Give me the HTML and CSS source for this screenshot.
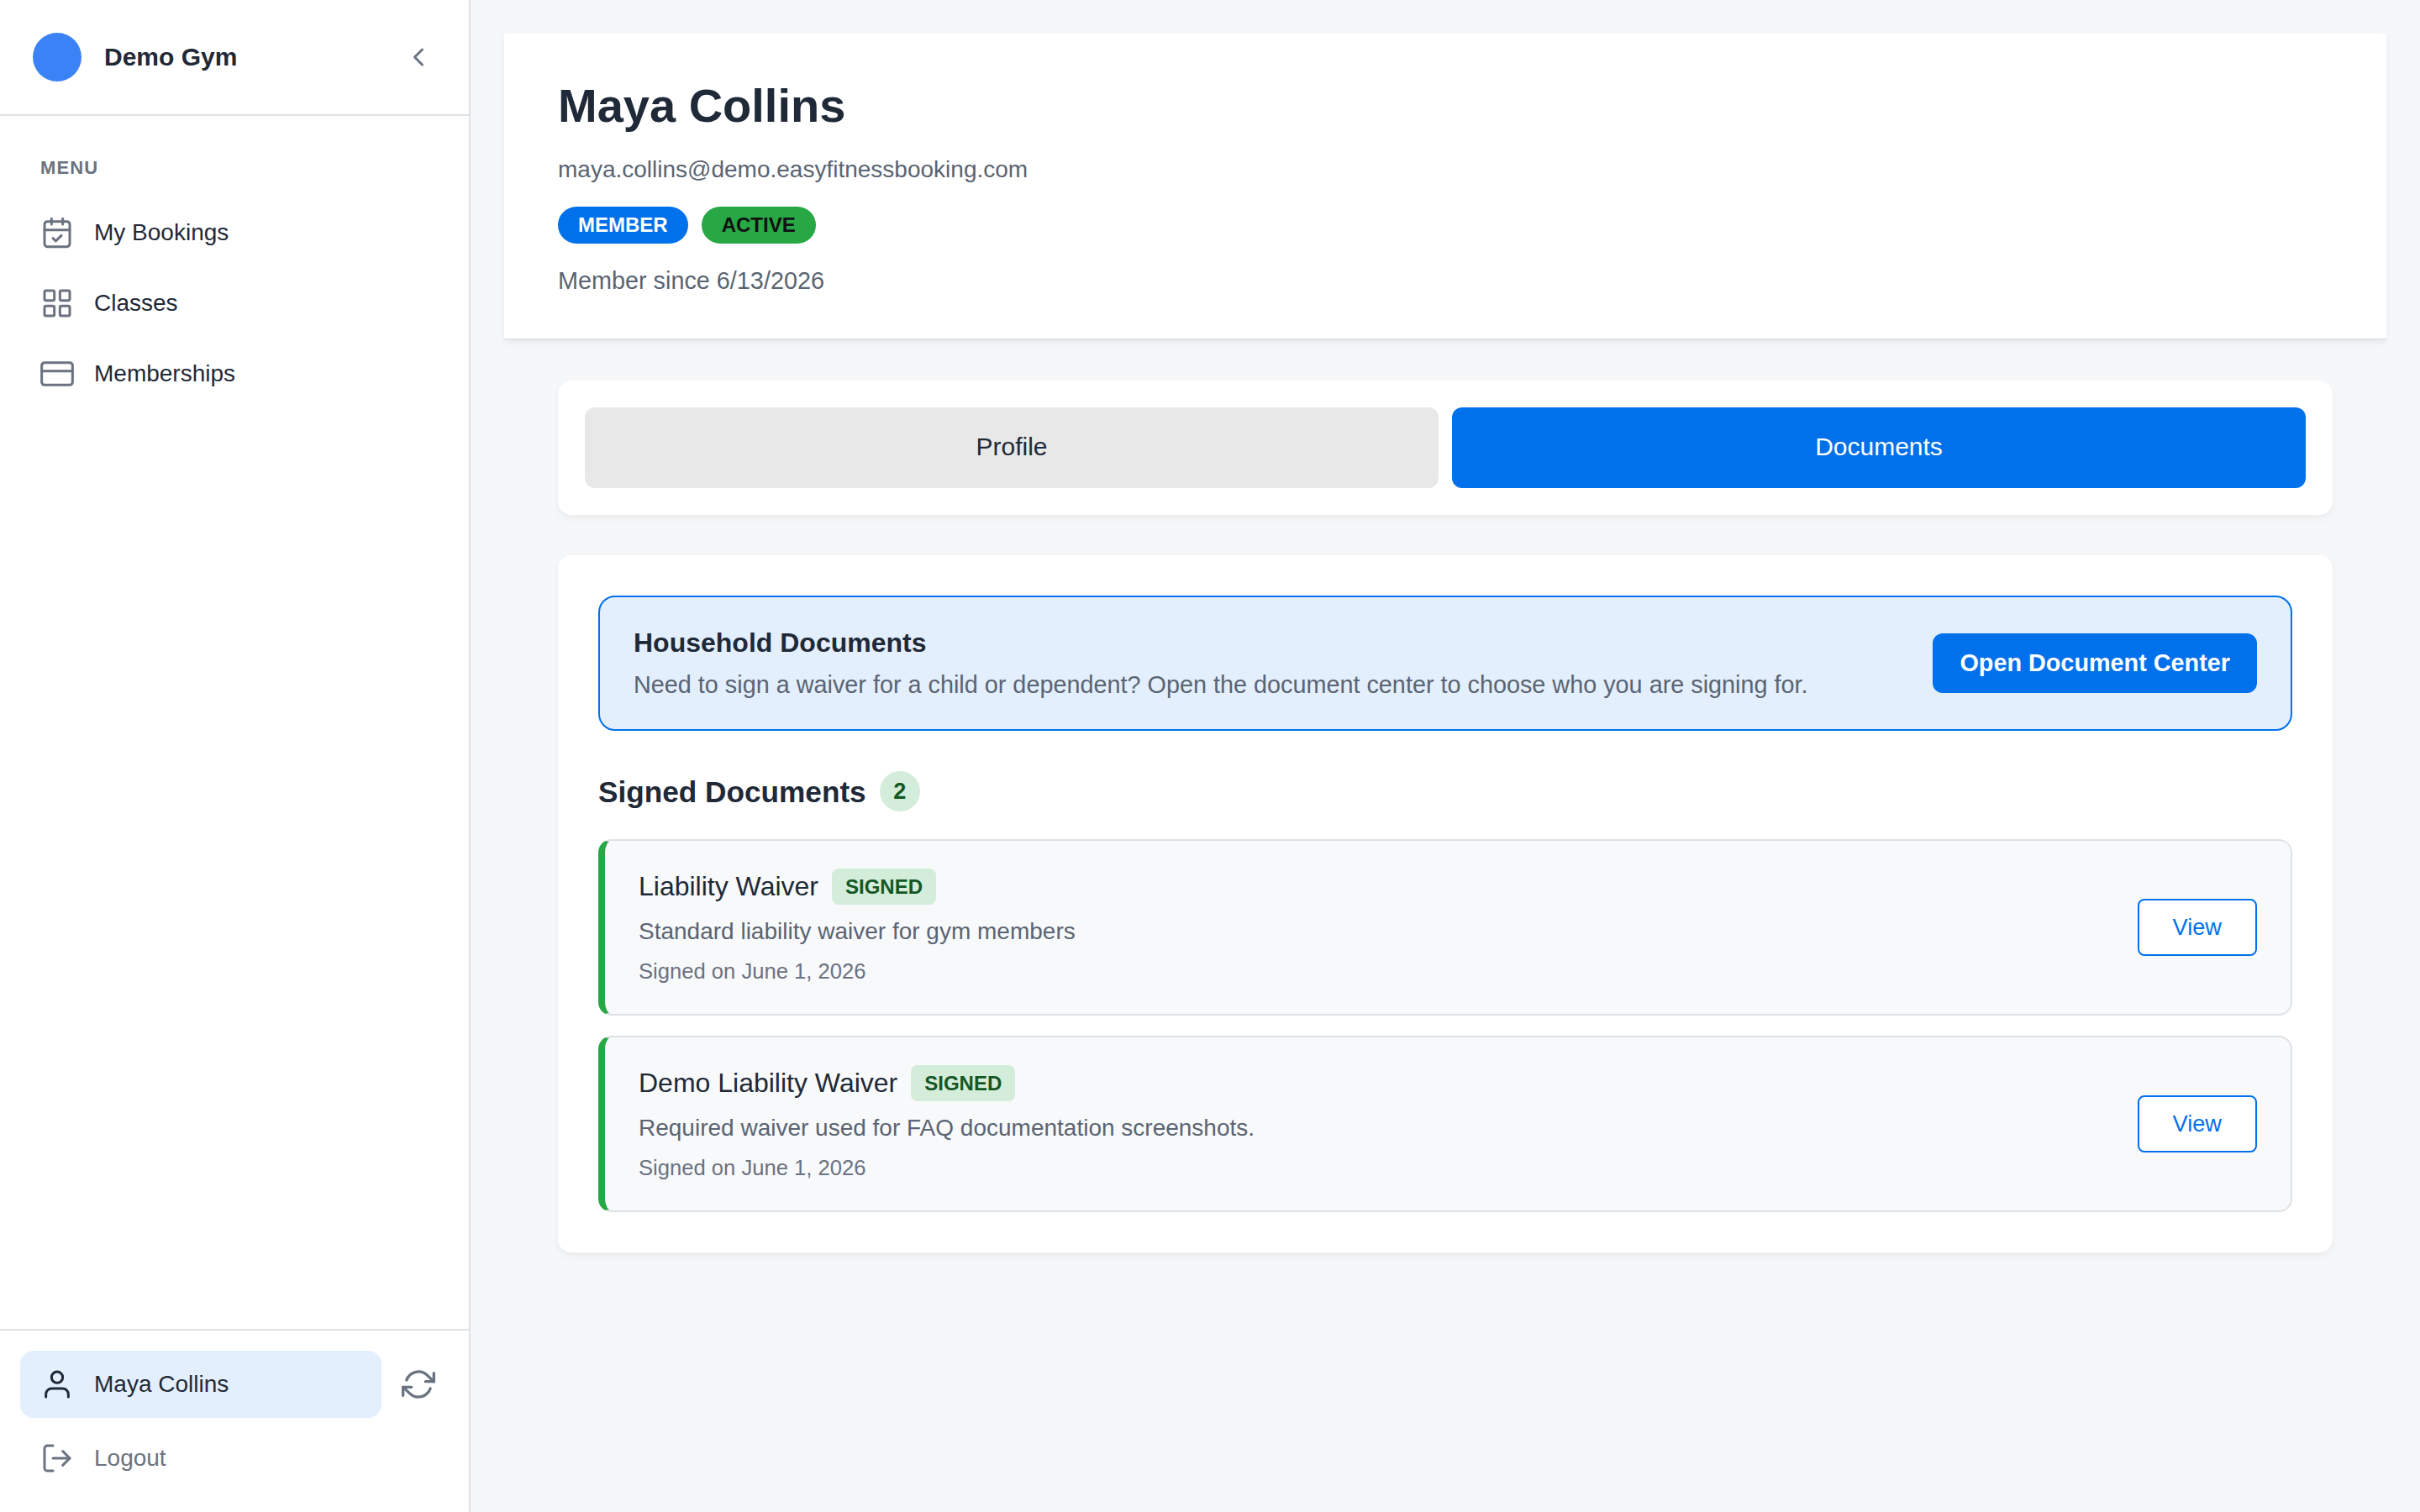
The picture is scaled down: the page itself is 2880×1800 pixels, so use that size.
FILE: index.html
```
<!DOCTYPE html>
<html lang="en">
<head>
    <meta charset="UTF-8">
    <meta name="viewport" content="width=device-width, initial-scale=1.0">
    <title>Demo Gym - Maya Collins</title>
    <link rel="stylesheet" href="styles.css">
</head>
<body>

    <!-- Sidebar -->
    <aside class="sidebar">
        <div class="sidebar-header">
            <div class="logo"></div>
            <span class="gym-name">Demo Gym</span>
            <svg class="collapse-icon" viewBox="0 0 24 24"><polyline points="15 18 9 12 15 6"/></svg>
        </div>

        <nav class="menu">
            <div class="menu-label">MENU</div>
            <a class="nav-item">
                <svg class="icon" viewBox="0 0 24 24"><rect x="3" y="4" width="18" height="18" rx="2"/><path d="M16 2v4M8 2v4M3 10h18M9 16l2 2 4-4"/></svg>
                My Bookings
            </a>
            <a class="nav-item">
                <svg class="icon" viewBox="0 0 24 24"><rect x="3" y="3" width="7" height="7" rx="1"/><rect x="14" y="3" width="7" height="7" rx="1"/><rect x="14" y="14" width="7" height="7" rx="1"/><rect x="3" y="14" width="7" height="7" rx="1"/></svg>
                Classes
            </a>
            <a class="nav-item">
                <svg class="icon" viewBox="0 0 24 24"><rect x="1" y="4" width="22" height="16" rx="2"/><path d="M1 10h22"/></svg>
                Memberships
            </a>
        </nav>

        <div class="sidebar-footer">
            <div class="user-row">
                <a class="nav-item active">
                    <svg class="icon" viewBox="0 0 24 24"><path d="M20 21v-2a4 4 0 0 0-4-4H8a4 4 0 0 0-4 4v2"/><circle cx="12" cy="7" r="4"/></svg>
                    Maya Collins
                </a>
                <svg class="icon refresh-icon" viewBox="0 0 24 24"><polyline points="23 4 23 10 17 10"/><polyline points="1 20 1 14 7 14"/><path d="M3.51 9a9 9 0 0 1 14.85-3.36L23 10M1 14l4.64 4.36A9 9 0 0 0 20.49 15"/></svg>
            </div>
            <a class="nav-item logout">
                <svg class="icon" viewBox="0 0 24 24"><path d="M9 21H5a2 2 0 0 1-2-2V5a2 2 0 0 1 2-2h4"/><polyline points="16 17 21 12 16 7"/><path d="M21 12H9"/></svg>
                Logout
            </a>
        </div>
    </aside>

    <!-- Main Content -->
    <main class="main">
        <header class="profile-header">
            <h1>Maya Collins</h1>
            <p class="email">maya.collins@demo.easyfitnessbooking.com</p>
            <div class="badges">
                <span class="badge badge-member">MEMBER</span>
                <span class="badge badge-active">ACTIVE</span>
            </div>
            <p class="member-since">Member since 6/13/2026</p>
        </header>

        <div class="content">
            <div class="card tabs">
                <button class="tab">Profile</button>
                <button class="tab selected">Documents</button>
            </div>

            <div class="card documents">
                <div class="banner">
                    <div>
                        <h3>Household Documents</h3>
                        <p>Need to sign a waiver for a child or dependent? Open the document center to choose who you are signing for.</p>
                    </div>
                    <button class="open-btn">Open Document Center</button>
                </div>

                <div class="section-title">
                    <h2>Signed Documents</h2>
                    <span class="count">2</span>
                </div>

                <div class="doc-list">
                    <div class="doc">
                        <div>
                            <div class="doc-title">Liability Waiver <span class="signed">SIGNED</span></div>
                            <p class="doc-desc">Standard liability waiver for gym members</p>
                            <p class="doc-date">Signed on June 1, 2026</p>
                        </div>
                        <button class="view-btn">View</button>
                    </div>
                    <div class="doc">
                        <div>
                            <div class="doc-title">Demo Liability Waiver <span class="signed">SIGNED</span></div>
                            <p class="doc-desc">Required waiver used for FAQ documentation screenshots.</p>
                            <p class="doc-date">Signed on June 1, 2026</p>
                        </div>
                        <button class="view-btn">View</button>
                    </div>
                </div>
            </div>
        </div>
    </main>

</body>
</html>
```
FILE: styles.css
```
* { box-sizing: border-box; }
body {
    margin: 0;
    height: 1800px;
    display: flex;
    background: #f5f7f9;
    color: #1f2937;
    font-family: Arial, "Liberation Sans", sans-serif;
    font-size: 28px;
}
h1, h2, h3, p { margin: 0; }
button { font-family: inherit; border: none; padding: 0; cursor: pointer; }

/* Sidebar */
.sidebar {
    width: 560px;
    flex-shrink: 0;
    display: flex;
    flex-direction: column;
    background: white;
    border-right: 2px solid #dee2e6;
}
.sidebar-header {
    display: flex;
    align-items: center;
    height: 138px;
    padding: 0 42px 0 39px;
    border-bottom: 2px solid #dee2e6;
}
.logo { width: 58px; height: 58px; border-radius: 50%; background: #3b82f6; }
.gym-name { flex: 1; margin-left: 27px; padding-bottom: 1px; font-size: 30px; font-weight: bold; }
.collapse-icon { width: 36px; height: 36px; }
.icon { width: 40px; height: 40px; flex-shrink: 0; }
.icon, .collapse-icon {
    fill: none;
    stroke: #6b7280;
    stroke-width: 1.8;
    stroke-linecap: round;
    stroke-linejoin: round;
}
.collapse-icon, .refresh-icon { stroke-width: 2; }

/* Menu */
.menu { flex: 1; display: flex; flex-direction: column; gap: 4px; padding: 46px 24px 0; }
.menu-label {
    padding-left: 24px;
    margin-bottom: 17px;
    font-size: 22px;
    line-height: 32px;
    font-weight: bold;
    letter-spacing: 1.1px;
    color: #6b7280;
}
.nav-item {
    display: flex;
    align-items: center;
    gap: 24px;
    height: 80px;
    padding: 0 24px;
    border-radius: 16px;
}
.nav-item.active { width: 430px; background: #e3effd; }
.nav-item.active .icon { stroke: #1f2937; }
.logout { color: #6b7280; }

/* Sidebar Footer */
.sidebar-footer {
    display: flex;
    flex-direction: column;
    gap: 8px;
    padding: 24px;
    border-top: 2px solid #dee2e6;
}
.user-row { display: flex; align-items: center; gap: 24px; }

/* Profile Header */
.main { flex: 1; padding: 40px; }
.profile-header {
    padding: 52px 64px 47px;
    background: white;
    border-bottom: 2px solid #dee2e6;
    box-shadow: 0 4px 8px rgba(0, 0, 0, 0.05);
}
h1 { font-size: 56px; line-height: 68px; }
.email { margin-top: 21px; line-height: 42px; color: #5a6472; }
.badges { display: flex; gap: 16px; margin-top: 23px; }
.badge { padding: 0 24px; border-radius: 24px; font-size: 24px; line-height: 44px; font-weight: bold; }
.badge-member { background: #0071eb; color: white; }
.badge-active { background: #28a745; color: #111; }
.member-since { margin-top: 22px; font-size: 28.8px; line-height: 44px; color: #5a6472; }

/* Cards */
.content { display: flex; flex-direction: column; gap: 48px; padding: 48px 64px 0; }
.card { background: white; border-radius: 16px; box-shadow: 0 4px 8px rgba(0, 0, 0, 0.05); }
.tabs { display: flex; gap: 16px; padding: 32px; }
.tab { flex: 1; height: 96px; padding-bottom: 2px; border-radius: 12px; background: #e8e8e8; color: #1f2937; font-size: 30px; }
.tab.selected { background: #0071eb; color: white; }
.documents { padding: 48px; }

/* Household Banner */
.banner {
    display: flex;
    justify-content: space-between;
    align-items: center;
    padding: 31px 40px 30px;
    border: 2px solid #0071eb;
    border-radius: 20px;
    background: #e3effd;
}
.banner h3 { margin-bottom: 4px; font-size: 32px; line-height: 46px; }
.banner p { font-size: 28.8px; line-height: 46px; color: #5a6472; }
.open-btn {
    height: 71px;
    margin-bottom: 2px;
    padding: 0 32px;
    border-radius: 12px;
    background: #0071eb;
    color: white;
    font-size: 28.8px;
    font-weight: bold;
}

/* Signed Documents */
.section-title { display: flex; align-items: center; gap: 16px; margin: 48px 0 33px; }
.section-title h2 { padding-top: 2px; font-size: 35.2px; line-height: 46px; }
.count {
    width: 48px;
    border-radius: 50%;
    background: #d4edda;
    color: #155724;
    font-size: 27.2px;
    line-height: 48px;
    font-weight: bold;
    text-align: center;
}
.doc-list { display: flex; flex-direction: column; gap: 24px; }
.doc {
    display: flex;
    justify-content: space-between;
    align-items: center;
    padding: 32px 40px;
    border: 2px solid #dee2e6;
    border-left: 8px solid #28a745;
    border-radius: 16px;
    background: #f8f9fb;
}
.doc-title { display: flex; align-items: center; gap: 16px; font-size: 32px; line-height: 44px; }
.signed { padding: 0 16px; border-radius: 8px; background: #d4edda; color: #155724; font-size: 24px; line-height: 43px; font-weight: bold; }
.doc-desc { margin-top: 11px; line-height: 42px; color: #5a6472; }
.doc-date { margin-top: 7px; font-size: 25.6px; line-height: 38px; color: #6b7280; }
.view-btn {
    height: 68px;
    padding: 0 40px;
    border: 2px solid #0071eb;
    border-radius: 8px;
    background: white;
    color: #0071eb;
    font-size: 27.2px;
}
```
